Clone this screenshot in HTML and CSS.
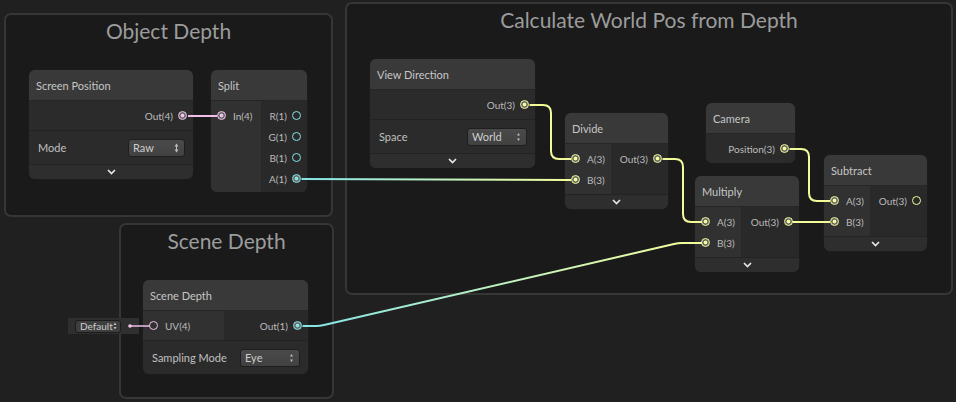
FILE: index.html
```html
<!DOCTYPE html>
<html>
<head>
<meta charset="utf-8">
<link rel="stylesheet" href="styles.css">
</head>
<body>
<div class="canvas">
  <div class="group g-obj"><div class="group-title">Object Depth</div></div>
  <div class="group g-calc"><div class="group-title">Calculate World Pos from Depth</div></div>
  <div class="group g-scene"><div class="group-title">Scene Depth</div></div>

  <!-- Screen Position -->
  <div class="node n-screen">
    <div class="node-title">Screen Position</div>
    <div class="ports">
      <div class="col out full">
        <div class="row out"><span>Out(4)</span><i class="port v4 on"></i></div>
      </div>
    </div>
    <div class="ctrl"><span>Mode</span><div class="dd dd-raw">Raw<svg width="5" height="10" viewBox="0 0 5 10"><path d="M2.5 0.5 L4.5 3.5 H0.5Z M2.5 9.5 L4.5 6.5 H0.5Z" fill="#bdbdbd"/><rect x="2" y="3" width="1" height="4" fill="#bdbdbd"/></svg></div></div>
    <div class="expand"><svg width="9" height="6" viewBox="0 0 9 6"><path d="M1 1 L4.5 4.5 L8 1" fill="none" stroke="#e6e6e6" stroke-width="1.7"/></svg></div>
  </div>

  <!-- Split -->
  <div class="node n-split">
    <div class="node-title">Split</div>
    <div class="ports">
      <div class="col in w50">
        <div class="row in"><i class="port v4 on"></i><span>In(4)</span></div>
      </div>
      <div class="col out">
        <div class="row out"><span>R(1)</span><i class="port v1"></i></div>
        <div class="row out"><span>G(1)</span><i class="port v1"></i></div>
        <div class="row out"><span>B(1)</span><i class="port v1"></i></div>
        <div class="row out"><span>A(1)</span><i class="port v1 on"></i></div>
      </div>
    </div>
  </div>

  <!-- Scene Depth -->
  <div class="node n-scene">
    <div class="node-title">Scene Depth</div>
    <div class="ports">
      <div class="col in w81">
        <div class="row in"><i class="port v4"></i><span>UV(4)</span></div>
      </div>
      <div class="col out">
        <div class="row out"><span>Out(1)</span><i class="port v1 on"></i></div>
      </div>
    </div>
    <div class="ctrl"><span>Sampling Mode</span><div class="dd dd-wide">Eye<svg width="5" height="10" viewBox="0 0 5 10"><path d="M2.5 1 L4 3.5 H1Z M2.5 9 L4 6.5 H1Z" fill="#bdbdbd"/></svg></div></div>
  </div>

  <!-- View Direction -->
  <div class="node n-view">
    <div class="node-title">View Direction</div>
    <div class="ports">
      <div class="col out full">
        <div class="row out"><span>Out(3)</span><i class="port v3 on"></i></div>
      </div>
    </div>
    <div class="ctrl"><span>Space</span><div class="dd dd-wide">World<svg width="5" height="10" viewBox="0 0 5 10"><path d="M2.5 1 L4 3.5 H1Z M2.5 9 L4 6.5 H1Z" fill="#bdbdbd"/></svg></div></div>
    <div class="expand"><svg width="9" height="6" viewBox="0 0 9 6"><path d="M1 1 L4.5 4.5 L8 1" fill="none" stroke="#e6e6e6" stroke-width="1.7"/></svg></div>
  </div>

  <!-- Divide -->
  <div class="node n-divide">
    <div class="node-title">Divide</div>
    <div class="ports">
      <div class="col in w46">
        <div class="row in"><i class="port v3 on"></i><span>A(3)</span></div>
        <div class="row in"><i class="port v3 on"></i><span>B(3)</span></div>
      </div>
      <div class="col out">
        <div class="row out"><span>Out(3)</span><i class="port v3 on"></i></div>
      </div>
    </div>
    <div class="expand"><svg width="9" height="6" viewBox="0 0 9 6"><path d="M1 1 L4.5 4.5 L8 1" fill="none" stroke="#e6e6e6" stroke-width="1.7"/></svg></div>
  </div>

  <!-- Camera -->
  <div class="node n-camera">
    <div class="node-title">Camera</div>
    <div class="ports">
      <div class="col out full">
        <div class="row out"><span>Position(3)</span><i class="port v3 on"></i></div>
      </div>
    </div>
  </div>

  <!-- Multiply -->
  <div class="node n-multiply">
    <div class="node-title">Multiply</div>
    <div class="ports">
      <div class="col in w46">
        <div class="row in"><i class="port v3 on"></i><span>A(3)</span></div>
        <div class="row in"><i class="port v3 on"></i><span>B(3)</span></div>
      </div>
      <div class="col out">
        <div class="row out"><span>Out(3)</span><i class="port v3 on"></i></div>
      </div>
    </div>
    <div class="expand"><svg width="9" height="6" viewBox="0 0 9 6"><path d="M1 1 L4.5 4.5 L8 1" fill="none" stroke="#e6e6e6" stroke-width="1.7"/></svg></div>
  </div>

  <!-- Subtract -->
  <div class="node n-subtract">
    <div class="node-title">Subtract</div>
    <div class="ports">
      <div class="col in w46">
        <div class="row in"><i class="port v3 on"></i><span>A(3)</span></div>
        <div class="row in"><i class="port v3 on"></i><span>B(3)</span></div>
      </div>
      <div class="col out">
        <div class="row out"><span>Out(3)</span><i class="port v3"></i></div>
      </div>
    </div>
    <div class="expand"><svg width="9" height="6" viewBox="0 0 9 6"><path d="M1 1 L4.5 4.5 L8 1" fill="none" stroke="#e6e6e6" stroke-width="1.7"/></svg></div>
  </div>

  <!-- default value field for UV(4) -->
  <div class="default-field">
    <div class="dd-small">Default<svg width="4" height="8" viewBox="0 0 4 8"><path d="M2 0.5 L3.5 3 H0.5Z M2 7.5 L3.5 5 H0.5Z" fill="#bdbdbd"/></svg></div>
  </div>

  <svg class="edges" width="956" height="402" viewBox="0 0 956 402">
    <defs>
      <linearGradient id="gA" gradientUnits="userSpaceOnUse" x1="301" y1="0" x2="571" y2="0">
        <stop offset="0" stop-color="#84e4e7"/>
        <stop offset="1" stop-color="#f6ff9a"/>
      </linearGradient>
      <linearGradient id="gB" gradientUnits="userSpaceOnUse" x1="302" y1="0" x2="702" y2="0">
        <stop offset="0" stop-color="#84e4e7"/>
        <stop offset="1" stop-color="#f6ff9a"/>
      </linearGradient>
    </defs>
    <g fill="none" stroke-width="2">
      <path d="M188 116 H217" stroke="#efbfe8"/>
      <path d="M301.5 179 C 430 179, 440 180, 571 180" stroke="url(#gA)"/>
      <path d="M529.5 105 H543 Q551 105 551 113 V151 Q551 159 559 159 H571" stroke="#f3fb98"/>
      <path d="M662.5 159 H675 Q683 159 683 167 V214 Q683 222 691 222 H702" stroke="#f3fb98"/>
      <path d="M789.5 149 H801 Q809 149 809 157 V193 Q809 201 817 201 H830" stroke="#f3fb98"/>
      <path d="M792.5 222 H830" stroke="#f3fb98"/>
      <path d="M302.5 326 H316 Q320 326 324 325 L674 244 Q678 243 682 243 H702" stroke="url(#gB)"/>
      <path d="M131 326 H150" stroke="#efbfe8" stroke-width="1.5"/>
    </g>
    <circle cx="130" cy="326" r="1.8" fill="#f4c6ee"/>
  </svg>
</div>
</body>
</html>
```

FILE: styles.css
```css
html, body {
  margin: 0;
  padding: 0;
  background: #202020;
}

.canvas {
  position: relative;
  width: 956px;
  height: 402px;
  overflow: hidden;
  background: #202020;
  font-family: Lato, "Open Sans", sans-serif;
}

/* ---------- groups ---------- */
.group {
  position: absolute;
  box-sizing: border-box;
  border: 2px solid #363636;
  border-radius: 7px;
  background: #1a1a1a;
}
.group-title {
  text-align: center;
  font-size: 21px;
  line-height: 24px;
  padding-top: 4px;
  color: #9c9c9c;
}
.g-obj   { left: 4px;   top: 13px;  width: 329px; height: 204px; }
.g-calc  { left: 345px; top: 2px;   width: 608px; height: 293px; }
.g-scene { left: 119px; top: 223px; width: 215px; height: 176px; }

/* ---------- nodes ---------- */
.node {
  position: absolute;
  display: flex;
  flex-direction: column;
  border-radius: 6px;
  overflow: hidden;
  background: #2b2b2b;
  box-shadow: 0 0 0 1px #1c1c1c;
  color: #c4c4c4;
}
.node-title {
  height: 30px;
  border-bottom: 1px solid #262626;
  background: #393939;
  display: flex;
  align-items: center;
  padding-left: 7px;
  font-size: 11px;
  color: #c6c6c6;
}
.ports {
  display: flex;
}
.col {
  padding: 4px 0;
  display: flex;
  flex-direction: column;
}
.col.in  { background: #313131; }
.col.out { background: #292929; flex: 1; }
.col.full { background: #2b2b2b; }
.w46 { width: 46px; }
.w50 { width: 50px; }
.w81 { width: 81px; }

.row {
  height: 21px;
  display: flex;
  align-items: center;
  font-size: 10px;
  color: #bcbcbc;
}
.row.in  { padding-left: 6px; gap: 7px; }
.row.out { padding-right: 6px; gap: 5px; justify-content: flex-end; }

/* ports */
.port {
  display: block;
  width: 9px;
  height: 9px;
  box-sizing: border-box;
  border-radius: 50%;
  border: 1.6px solid currentColor;
  flex: none;
}
.port.v4 { color: #f0c2ea; }
.port.v1 { color: #84e4e7; }
.port.v3 { color: #f4fc9a; }
.port.on {
  background: radial-gradient(circle, currentColor 0 1.6px, #6b6b6b 2.2px);
}

/* controls */
.ctrl {
  height: 33px;
  border-top: 1px solid #232323;
  display: flex;
  align-items: center;
  justify-content: space-between;
  padding: 0 8px 0 9px;
  font-size: 11px;
  color: #c0c0c0;
  background: #2b2b2b;
}
.dd {
  box-sizing: border-box;
  height: 18px;
  width: 58px;
  border: 1px solid #1e1e1e;
  border-radius: 3px;
  background: linear-gradient(#4a4a4a, #414141);
  display: flex;
  align-items: center;
  justify-content: space-between;
  padding: 0 5px 0 4px;
  font-size: 11px;
  color: #cdcdcd;
}
.dd-raw { width: 57px; }
.dd-wide { width: 60px; }

.expand {
  height: 14px;
  border-top: 1px solid #232323;
  background: #2e2e2e;
  display: flex;
  align-items: center;
  justify-content: center;
}

/* node positions */
.n-screen   { left: 29px;  top: 70px;  width: 164px; }
.n-split    { left: 211px; top: 70px;  width: 96px; }
.n-split .col.out { padding-bottom: 3px; }
.n-scene    { left: 143px; top: 280px; width: 165px; }
.n-view     { left: 370px; top: 59px;  width: 165px; }
.n-divide   { left: 565px; top: 113px; width: 103px; }
.n-camera   { left: 706px; top: 103px; width: 89px; }
.n-multiply { left: 695px; top: 176px; width: 104px; }
.n-subtract { left: 824px; top: 155px; width: 103px; }

/* default value field */
.default-field {
  position: absolute;
  left: 68px;
  top: 318px;
  width: 71px;
  height: 16px;
  background: #2f2f2f;
  display: flex;
  align-items: center;
  padding-left: 7px;
  box-sizing: border-box;
}
.dd-small {
  box-sizing: border-box;
  width: 46px;
  height: 13px;
  border: 1px solid #1c1c1c;
  border-radius: 3px;
  background: #3e3e3e;
  display: flex;
  align-items: center;
  justify-content: space-between;
  padding: 0 3px 0 4px;
  font-size: 10px;
  color: #cdcdcd;
}

.edges {
  position: absolute;
  left: 0;
  top: 0;
  pointer-events: none;
}
```
